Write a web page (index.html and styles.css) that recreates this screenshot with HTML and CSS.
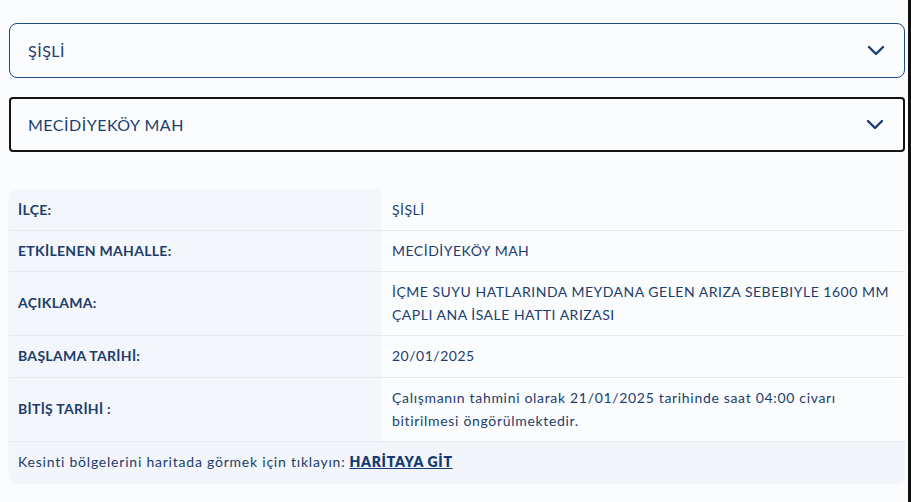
FILE: index.html
```html
<!DOCTYPE html>
<html lang="tr">
<head>
<meta charset="utf-8">
<link rel="stylesheet" href="styles.css">
</head>
<body>
<div class="page">
  <div class="select select-blue">
    <span>ŞİŞLİ</span>
    <svg class="chev" width="18" height="11" viewBox="0 0 18 11"><path d="M2 2 L9 9 L16 2" fill="none" stroke="#1a3d73" stroke-width="2.4" stroke-linecap="round" stroke-linejoin="round"/></svg>
  </div>
  <div class="select select-dark">
    <span>MECİDİYEKÖY MAH</span>
    <svg class="chev" width="18" height="11" viewBox="0 0 18 11"><path d="M2 2 L9 9 L16 2" fill="none" stroke="#1a3d73" stroke-width="2.4" stroke-linecap="round" stroke-linejoin="round"/></svg>
  </div>
  <div class="card">
    <div class="row h40"><div class="lab">İLÇE:</div><div class="val">ŞİŞLİ</div></div>
    <div class="row h41"><div class="lab">ETKİLENEN MAHALLE:</div><div class="val">MECİDİYEKÖY MAH</div></div>
    <div class="row h64"><div class="lab">AÇIKLAMA:</div><div class="val">İÇME SUYU HATLARINDA MEYDANA GELEN ARIZA SEBEBIYLE 1600 MM<br>ÇAPLI ANA İSALE HATTI ARIZASI</div></div>
    <div class="row h42"><div class="lab">BAŞLAMA TARİHİ:</div><div class="val">20/01/2025</div></div>
    <div class="row h64"><div class="lab">BİTİŞ TARİHİ :</div><div class="val val-lower">Çalışmanın tahmini olarak 21/01/2025 tarihinde saat 04:00 civarı<br>bitirilmesi öngörülmektedir.</div></div>
    <div class="foot">Kesinti bölgelerini haritada görmek için tıklayın: <a href="#">HARİTAYA GİT</a></div>
  </div>
</div>
</body>
</html>
```
FILE: styles.css
```css
html, body { margin: 0; padding: 0; }
body {
  background: #fafcfe;
  font-family: Lato, "Open Sans", sans-serif;
  color: #1c3d6e;
  height: 502px;
  overflow: hidden;
  border-right: 3px solid #111;
  box-sizing: border-box;
}
.page {
  padding: 23px 3px 0 9px;
  width: 896px;
}
.select {
  display: flex;
  align-items: center;
  justify-content: space-between;
  box-sizing: border-box;
  height: 55px;
  padding: 0 18px 0 18px;
  font-size: 16px;
  letter-spacing: 0.5px;
  background: #fafcfe;
}
.select-blue {
  border: 1px solid #1e4a85;
  border-radius: 8px;
}
.select-dark {
  margin-top: 19px;
  border: 2px solid #141414;
  border-radius: 4px;
  padding-left: 17px;
}
.chev { margin-right: 1px; }
.card {
  margin-top: 38px;
  border-radius: 8px;
  overflow: hidden;
  background: #fafcfe;
  box-shadow: 0 1px 3px rgba(30, 60, 110, 0.06);
}
.row {
  display: grid;
  grid-template-columns: 372px 1fr;
  border-bottom: 1px solid #e7ebf1;
  font-size: 14px;
  letter-spacing: 0.5px;
}
.h40 { height: 40px; }
.h41 { height: 40px; }
.h64 { height: 63px; }
.h42 { height: 41px; }
.lab {
  background: #f3f6fa;
  display: flex;
  align-items: center;
  padding: 0 0 2px 9px;
  font-weight: 700;
  letter-spacing: 0.3px;
}
.val {
  display: flex;
  align-items: center;
  padding: 0 0 2px 11px;
  line-height: 23px;
}
.val-lower { letter-spacing: 0.68px; }
.foot {
  background: #f2f5f9;
  height: 40px;
  box-sizing: border-box;
  display: flex;
  align-items: center;
  padding: 0 0 2px 9px;
  font-size: 14px;
  letter-spacing: 0.78px;
}
.foot a {
  color: #123b73;
  font-weight: 800;
  margin-left: 4px;
  letter-spacing: 0.7px;
  text-decoration: underline;
}
```
